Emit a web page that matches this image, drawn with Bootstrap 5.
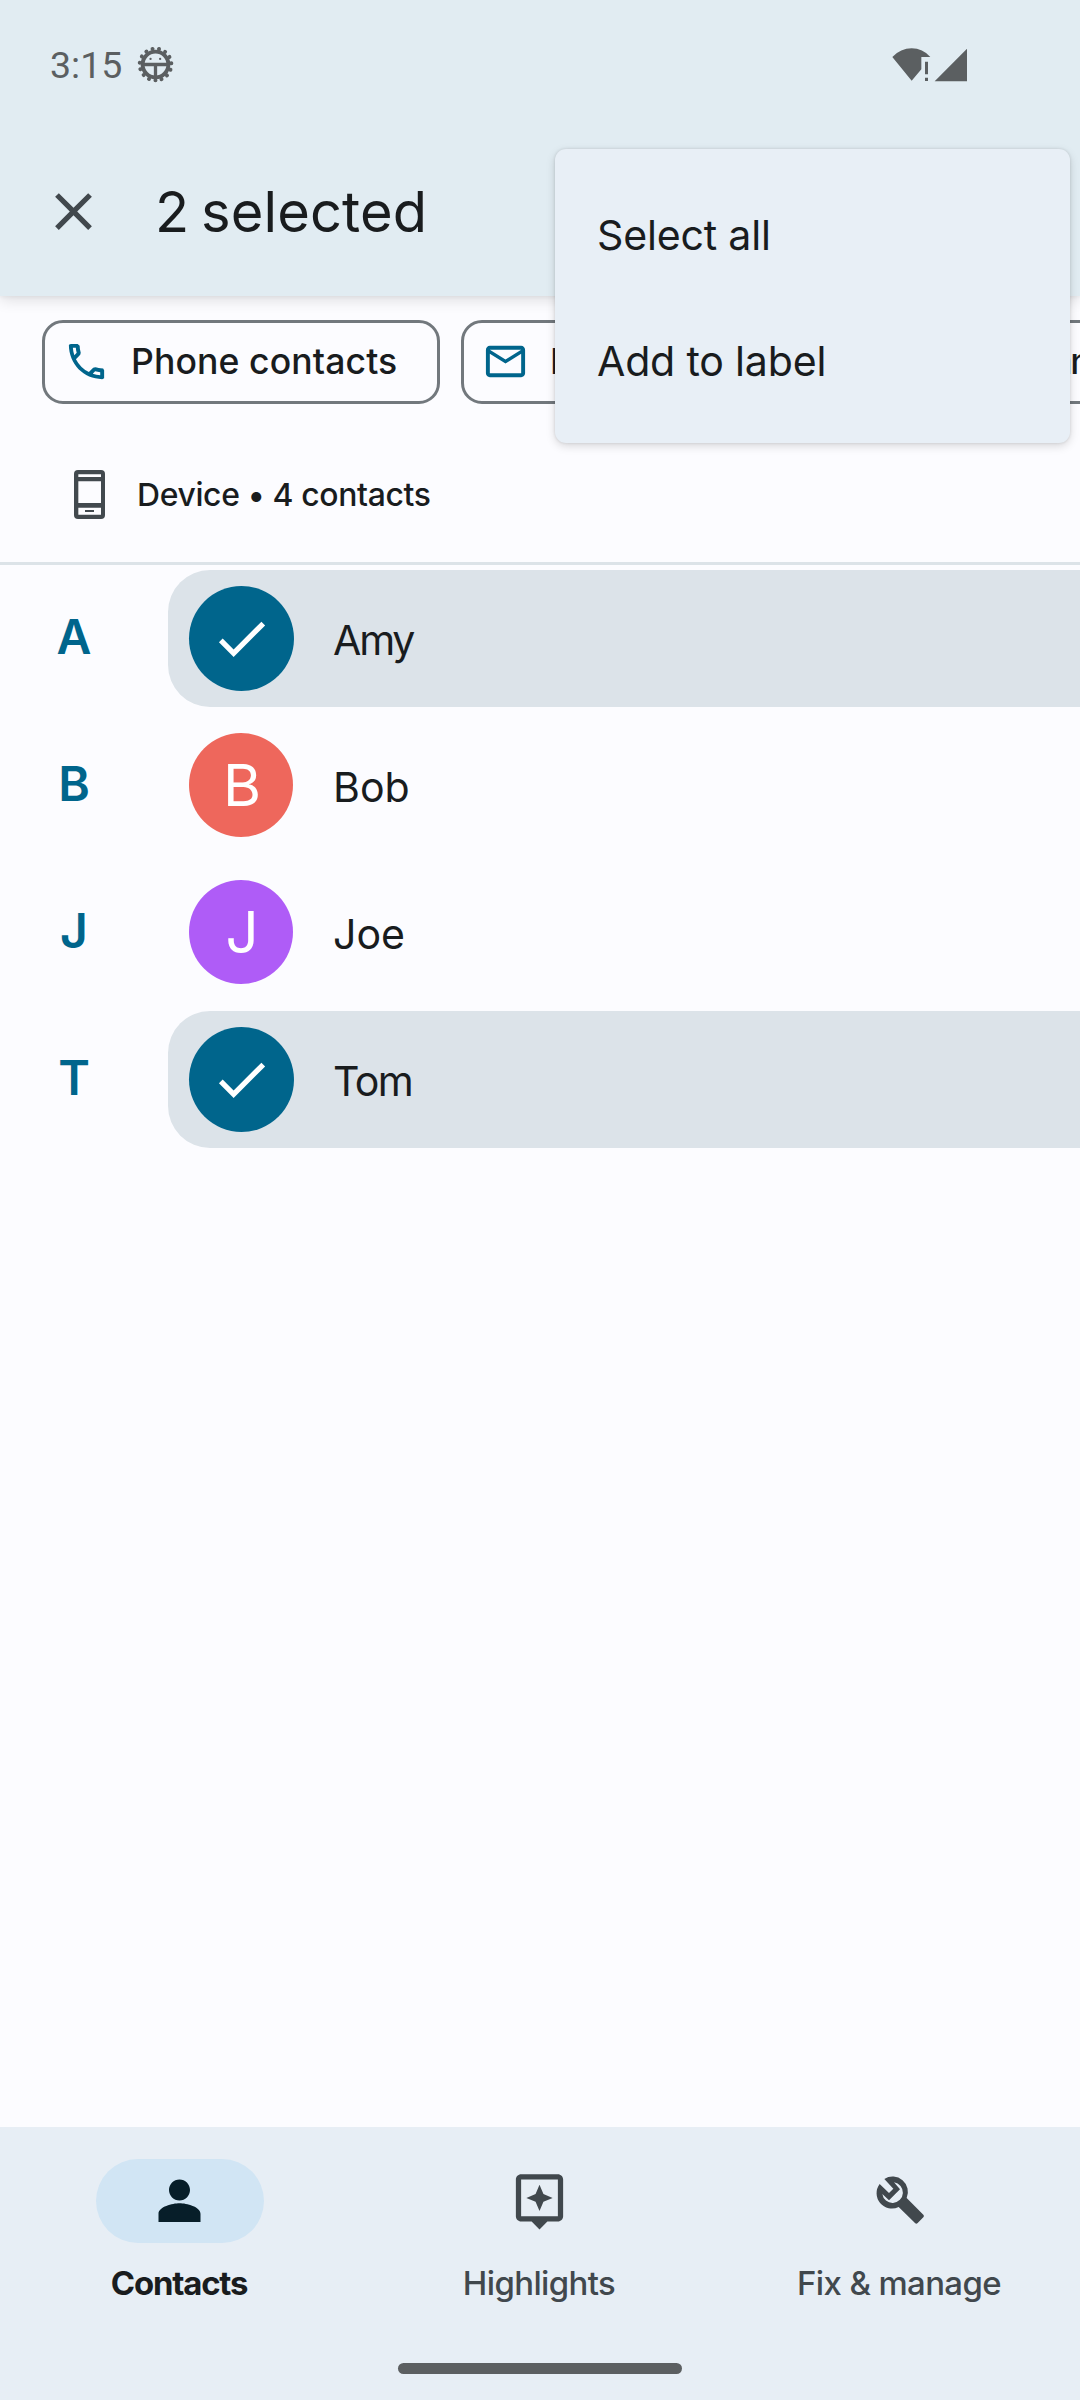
<!DOCTYPE html>
<html lang="en">
<head>
<meta charset="utf-8">
<meta name="viewport" content="width=device-width, initial-scale=1">
<title>Contacts</title>
<link href="https://cdn.jsdelivr.net/npm/bootstrap@5.3.0/dist/css/bootstrap.min.css" rel="stylesheet">
<style>
  body { font-family: Inter, Roboto, sans-serif; color: #191c1e; background: #fcfcff; overflow: hidden; line-height: 1; }
  svg { display: block; flex: none; }
  .phone { width: 1080px; height: 2400px; overflow: hidden; }
  .topbar { background: #e1ecf2; height: 296px; z-index: 2; box-shadow: 0 4px 14px rgba(0,0,0,.12), 0 1px 4px rgba(0,0,0,.05); }
  .statusbar { height: 128px; padding: 1px 112px 0 50px; color: #5b5f61; }
  .clock { font-family: Roboto, sans-serif; font-size: 37.5px; padding-top: 3px; }
  .bug { margin-left: 15px; }
  .toolbar-row { height: 168px; padding: 0 0 1px 42px; }
  .heading { font-size: 56px; letter-spacing: .1px; word-spacing: -4px; margin-left: 50px; }
  .filters { padding: 24px 0 0 42px; gap: 21px; }
  .chip { height: 84px; border: 3px solid #72787d; border-radius: 21px; padding: 0 0 1px 18px; font-size: 35.6px; font-weight: 500; gap: 21px; letter-spacing: .1px; flex: none; }
  .chip-phone { width: 398px; }
  .chip-mail { width: 389px; }
  .chip-company { width: 300px; padding-left: 18px; letter-spacing: -2.3px; }
  .account { height: 158px; padding: 22px 0 0 74px; font-size: 31.9px; font-weight: 500; letter-spacing: -.35px; gap: 32px; }
  .account span { padding-top: 2px; }
  .divide { height: 3px; background: #dce3e8; }
  .entry { height: 147px; }
  .index { width: 148px; color: #00658c; font-size: 48px; font-weight: 600; padding-bottom: 3px; }
  .person { height: 137px; margin-left: 20px; padding-left: 21px; border-radius: 42px 0 0 42px; gap: 39px; font-size: 41.1px; }
  .person.chosen { background: #dce3e9; }
  .avatar { width: 105px; height: 105px; font-size: 58.2px; color: #fff; background: #00658c; }
  .avatar.initial { width: 104px; height: 104px; margin: 0 1px 1px 0; padding-left: 2px; }
  .coral { background: #ee675c; }
  .violet { background: #af5cf7; }
  .person-name { padding-top: 5px; }
  .bottom-nav { height: 273px; background: #e7eef5; padding-top: 32px; }
  .tab { gap: 24px; color: #41484d; font-size: 32.9px; font-weight: 500; letter-spacing: -.6px; }
  .tab.current { color: #191c1e; font-weight: 700; letter-spacing: -1.2px; }
  .caption-text { padding-right: 2px; }
  .pill { width: 168px; height: 84px; padding: 0 2px 2px 0; }
  .current .pill { background: #d1e5f4; color: #071e29; }
  .home-bar { width: 284px; height: 11px; background: #5c5f61; margin-top: 63px; }
  .overflow-menu { left: 555px; top: 149px; width: 515px; height: 294px; padding: 24px 0 18px; border: 0; border-radius: 11px; background: #e8eff6; z-index: 5; box-shadow: 0 3px 10px rgba(0,0,0,.15), 0 0 3px rgba(0,0,0,.12); --bs-dropdown-item-padding-x: 42px; }
  .overflow-menu .dropdown-item { height: 126px; font-size: 41.1px; letter-spacing: -.2px; color: #191c1e; display: flex; align-items: center; line-height: 1; }
</style>
</head>
<body>
<div class="phone position-relative d-flex flex-column">

  <header class="topbar position-relative">
    <div class="statusbar d-flex align-items-center">
      <span class="clock">3:15</span>
      <svg class="bug" width="37" height="37" viewBox="52 49 112 112" fill="none" stroke="currentColor">
        <g transform="translate(108 105)">
          <circle r="39" stroke-width="12"/>
          <circle r="48" stroke-width="12" stroke-linecap="round" pathLength="15" stroke-dasharray="0.01 0.99" transform="rotate(90)"/>
          <path d="M-38 0H38M0 0V40" stroke-width="10"/>
          <circle cx="-15" cy="-17" r="3.5" fill="currentColor" stroke="none"/>
          <circle cx="14" cy="-17" r="3.5" fill="currentColor" stroke="none"/>
        </g>
      </svg>
      <svg class="ms-auto" width="76" height="34" viewBox="36 50 228 102" fill="currentColor">
        <path d="M37 77Q62 51 95 51T151 77H124V114L95 148Z"/>
        <path d="M135 91h9v38h-9zM135 139h9v10h-9zM164 149.500L261 52V149.500Z"/>
      </svg>
    </div>
    <div class="toolbar-row d-flex align-items-center">
      <svg width="63" height="63" viewBox="0 0 24 24" fill="#41484d"><path d="M19 6.410L17.590 5 12 10.590 6.410 5 5 6.410 10.590 12 5 17.590 6.410 19 12 13.410 17.590 19 19 17.590 13.410 12z"/></svg>
      <span class="heading">2 selected</span>
    </div>
  </header>

  <section class="filters d-flex text-nowrap">
    <div class="chip chip-phone d-flex align-items-center">
      <svg width="47" height="47" viewBox="0 0 24 24" fill="#00658c"><path d="M6.540 5c.06.89.21 1.760.45 2.590l-1.200 1.200c-.41-1.200-.67-2.470-.76-3.790h1.510m9.860 12.020c.85.24 1.720.39 2.600.45v1.490c-1.320-.09-2.590-.35-3.800-.75l1.200-1.190M7.500 3H4L3 3.500C3 13.390 10.610 21 20 21L21 20.500V16.510L20.500 15.600C18.700 15.510 17.550 15.140 16.430 14.940L15.400 15.180L13.200 17.380A15.150 15.150 0 0 1 6.610 10.790L8.810 8.590L9.060 7.570A11.360 11.360 0 0 1 8.500 4z"/></svg>
      <span>Phone contacts</span>
    </div>
    <div class="chip chip-mail d-flex align-items-center">
      <svg width="47" height="47" viewBox="0 0 24 24" fill="#00658c"><path d="M20 4H4c-1.100 0-2 .9-2 2v12c0 1.100.9 2 2 2h16c1.100 0 2-.9 2-2V6c0-1.100-.9-2-2-2zm0 14H4V8l8 5 8-5v10zm-8-7L4 6h16l-8 5z"/></svg>
      <span>Email contacts</span>
    </div>
    <div class="chip chip-company d-flex align-items-center">
      <svg width="47" height="47" viewBox="0 0 24 24" fill="#00658c"><path d="M12 7V3H2v18h20V7H12zM6 19H4v-2h2v2zm0-4H4v-2h2v2zm0-4H4V9h2v2zm0-4H4V5h2v2zm4 12H8v-2h2v2zm0-4H8v-2h2v2zm0-4H8V9h2v2zm0-4H8V5h2v2zm10 12h-8V9h8v10z"/></svg>
      <span>Company</span>
    </div>
  </section>

  <section class="account d-flex align-items-center">
    <svg width="31" height="49" viewBox="102 507 93 147"><rect x="102" y="507" width="93" height="147" rx="12" fill="#42494e"/><path d="M115 520h68v8h-68zM115 541h68v65h-68zM115 620h68v21h-68z" fill="#fcfcff"/><path d="M135 627h27v6h-27z" fill="#42494e"/></svg>
    <span>Device • 4 contacts</span>
  </section>
  <div class="divide"></div>

  <main class="flex-grow-1">
    <div class="entry d-flex align-items-center">
      <div class="index text-center">A</div>
      <div class="person chosen d-flex align-items-center flex-grow-1">
        <span class="avatar rounded-circle d-flex align-items-center justify-content-center"><svg width="63" height="63" viewBox="0 0 24 24" fill="#fff"><path d="M9 16.170L4.830 12l-1.420 1.410L9 19 21 7l-1.410-1.410z"/></svg></span>
        <span class="person-name" style="letter-spacing:-2.2px">Amy</span>
      </div>
    </div>
    <div class="entry d-flex align-items-center">
      <div class="index text-center">B</div>
      <div class="person d-flex align-items-center flex-grow-1">
        <span class="avatar initial coral rounded-circle d-flex align-items-center justify-content-center">B</span>
        <span class="person-name">Bob</span>
      </div>
    </div>
    <div class="entry d-flex align-items-center">
      <div class="index text-center">J</div>
      <div class="person d-flex align-items-center flex-grow-1">
        <span class="avatar initial violet rounded-circle d-flex align-items-center justify-content-center">J</span>
        <span class="person-name">Joe</span>
      </div>
    </div>
    <div class="entry d-flex align-items-center">
      <div class="index text-center">T</div>
      <div class="person chosen d-flex align-items-center flex-grow-1">
        <span class="avatar rounded-circle d-flex align-items-center justify-content-center"><svg width="63" height="63" viewBox="0 0 24 24" fill="#fff"><path d="M9 16.170L4.830 12l-1.420 1.410L9 19 21 7l-1.410-1.410z"/></svg></span>
        <span class="person-name" style="letter-spacing:-1.6px">Tom</span>
      </div>
    </div>
  </main>

  <footer class="bottom-nav">
    <nav class="row g-0">
      <div class="tab current col d-flex flex-column align-items-center">
        <span class="pill rounded-pill d-flex align-items-center justify-content-center"><svg width="63" height="63" viewBox="0 0 24 24" fill="currentColor"><path d="M12 12c2.210 0 4-1.790 4-4s-1.790-4-4-4-4 1.790-4 4 1.790 4 4 4zm0 1c-2.670 0-8 1.340-8 4v3.200h16V17c0-2.660-5.330-4-8-4z"/></svg></span>
        <span class="caption-text">Contacts</span>
      </div>
      <div class="tab col d-flex flex-column align-items-center">
        <span class="pill d-flex align-items-center justify-content-center"><svg width="63" height="63" viewBox="0 0 24 24" fill="currentColor"><path fill-rule="evenodd" d="M19 2H5c-1.100 0-2 .9-2 2v14c0 1.100.9 2 2 2h4l3 3 3-3h4c1.100 0 2-.9 2-2V4c0-1.100-.9-2-2-2zm0 16H5V4h14v14zM12 16l1.500-3.500L17 11l-3.500-1.500L12 6l-1.500 3.500L7 11l3.500 1.500z"/></svg></span>
        <span class="caption-text">Highlights</span>
      </div>
      <div class="tab col d-flex flex-column align-items-center">
        <span class="pill d-flex align-items-center justify-content-center"><svg width="63" height="63" viewBox="21 27 189 189" fill="currentColor"><path fill-rule="evenodd" d="M56 72L84 99L97 86L70 57A46 46 0 0 1 137 114L187 164Q191 168 187 172L170 189Q166 193 162 189L113 141A46 46 0 0 1 56 72ZM64 102L84 121L117 88L99 67A31 31 0 1 1 64 102Z"/></svg></span>
        <span class="caption-text">Fix &amp; manage</span>
      </div>
    </nav>
    <div class="home-bar rounded-pill mx-auto"></div>
  </footer>

  <div class="overflow-menu dropdown-menu show position-absolute">
    <a class="dropdown-item">Select all</a>
    <a class="dropdown-item">Add to label</a>
  </div>
</div>
<script src="https://cdn.jsdelivr.net/npm/bootstrap@5.3.0/dist/js/bootstrap.bundle.min.js"></script>
</body>
</html>
